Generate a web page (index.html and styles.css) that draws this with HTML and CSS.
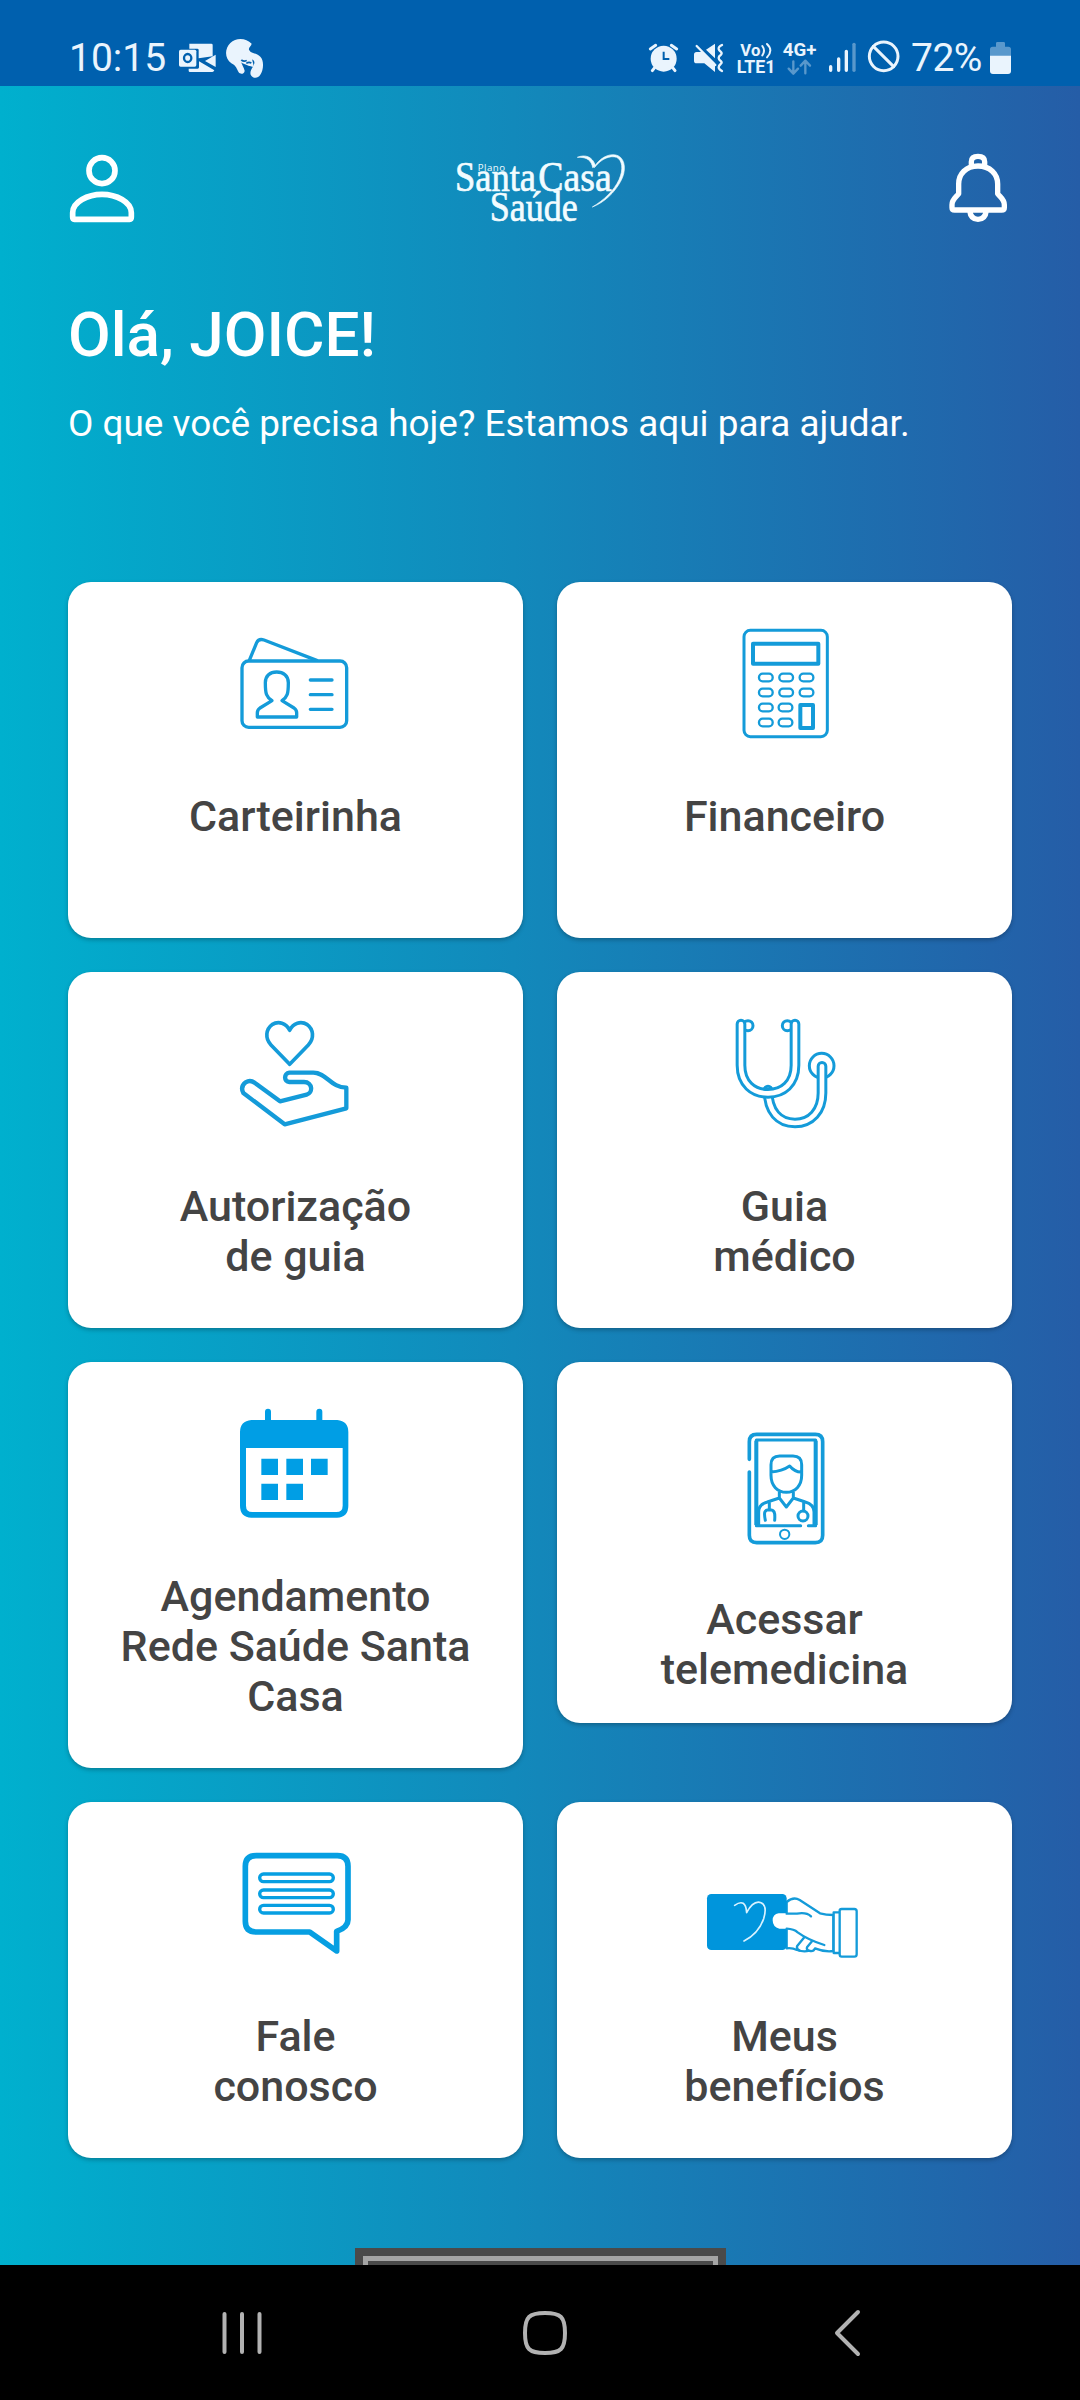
FILE: index.html
```html
<!DOCTYPE html>
<html lang="pt-BR">
<head>
<meta charset="utf-8">
<title>Santa Casa Saúde</title>
<link rel="stylesheet" href="styles.css">
</head>
<body>
<div class="screen">
  <div class="status">
    <span class="status__time">10:15</span>
    <svg class="slot" width="45" height="86" viewBox="408 0 135 258">
      <path d="M448 131h66q4 0 4 4v34l-42 6v-25q0-4-4-4h-24zM527 164v37l-32-18zM446 206h27q4 0 4-4v-18l46 27q-2 5-6 5h-67q-4 0-4-4z"/>
      <rect x="417" y="149" width="52" height="51" rx="5"/>
      <ellipse class="cut" cx="443" cy="174" rx="11" ry="12" stroke-width="7"/>
    </svg>
    <svg class="slot" width="45" height="86" viewBox="543 0 135 258">
      <path d="M635 131C618 113 588 112 571 129C552 148 555 177 574 190C590 198 590 207 596 217C602 225 614 221 614 212C612 203 604 192 602 180C606 184 614 181 620 179C634 174 645 180 643 190C641 202 628 211 632 224C637 236 654 236 660 226C672 209 672 181 661 170C650 159 632 161 627 149C625 142 634 139 635 131z"/>
      <path d="M600 176l36 0l6 26l-20-6l-18-8z"/>
      <path class="cut" d="M604 180q8 6 16 1M619 190q7-5 15-1" stroke-width="5"/>
    </svg>
    <span class="grow"></span>
    <svg class="slot" width="45" height="86" viewBox="75 0 135 258">
      <circle cx="131" cy="176" r="39"/>
      <path class="line" d="M91 147l16-11M170 147l-16-11M104 203l-7 9M158 203l7 9" stroke-width="9"/>
      <path class="cut" d="M131 155v22h17" stroke-width="6"/>
    </svg>
    <svg class="slot" width="43" height="86" viewBox="210 0 129 258">
      <path d="M230 156h20l35 34v26l-32-26h-23q-8 0-8-8v-18q0-8 8-8zM258 149l27-18v44z"/>
      <path class="line" d="M230 138l56 57" stroke-width="7"/>
      <path class="line" d="M306 135q-11 5-10 12q1 4 6 8q6 5 0 10q-6 4-6 9q0 5 6 9q6 5 0 9q-6 5-6 10q0 6 10 11" stroke-width="7"/>
    </svg>
    <svg class="slot" width="47" height="86" viewBox="339 0 141 258">
      <text class="badge" x="361" y="168" font-size="49" textLength="60" lengthAdjust="spacingAndGlyphs">Vo</text>
      <path class="line" d="M427 138q10 14 0 28M441 132q20 19 0 40" stroke-width="6"/>
      <text class="badge" x="350" y="220" font-size="53" textLength="116" lengthAdjust="spacingAndGlyphs">LTE1</text>
    </svg>
    <svg class="slot" width="45" height="86" viewBox="480 0 135 258">
      <text class="badge" x="488" y="168" font-size="54" textLength="101" lengthAdjust="spacingAndGlyphs">4G+</text>
      <path class="line dim" d="M520 184v36M506 206l14 15l14-15M556 220v-37M542 197l14-15l14 15" stroke-width="7"/>
    </svg>
    <svg class="slot" width="40" height="86" viewBox="615 0 120 258">
      <path class="line" d="M632 200v11M656 177v34M679 154v57" stroke-width="10"/>
      <path class="line dim" d="M702 133v78" stroke-width="10"/>
    </svg>
    <svg class="slot" width="45" height="86" viewBox="735 0 135 258">
      <circle class="line" cx="791" cy="169" r="43" stroke-width="9"/>
      <path class="line" d="M760 139l61 61" stroke-width="9"/>
    </svg>
    <span class="status__level">72%</span>
    <svg class="slot" width="25" height="86" viewBox="1101 0 75 258">
      <path opacity=".38" d="M1110 168v-20q0-8 8-8h10v-10q0-4 4-4h19q4 0 4 4v10h10q8 0 8 8v20z"/>
      <path d="M1110 167h63v46q0 9-9 9h-45q-9 0-9-9z"/>
    </svg>
  </div>

  <main class="home">
    <header class="top">
      <svg width="68" height="77" viewBox="84 450 204 231" class="outline" stroke-width="17">
        <circle cx="186" cy="512" r="39"/>
        <path d="M103 658q-5 0-5-7v-13c0-32 45-55 88-55s88 23 88 55v13q0 7-5 7z"/>
      </svg>
      <svg width="180" height="77" viewBox="90 60 540 231" class="logo">
        <text class="plan" x="173" y="122" font-size="29" textLength="82">Plano</text>
        <text x="105" y="182" font-size="126" textLength="243" lengthAdjust="spacingAndGlyphs">Santa</text>
        <text x="355" y="182" font-size="126" textLength="220" lengthAdjust="spacingAndGlyphs">Casa</text>
        <text x="209" y="272" font-size="126" textLength="264" lengthAdjust="spacingAndGlyphs">Saúde</text>
        <path d="M472 82C496 72 517 80 526 106C523 111 521 112 518 113C515 94 503 80 472 82zM526 106C546 77 575 69 594 77C617 88 619 124 602 154C583 189 552 218 517 231C551 211 582 182 597 149C611 118 607 91 590 82C571 76 546 84 523 113z"/>
      </svg>
      <svg width="68" height="77" viewBox="972 450 204 231" class="outline" stroke-width="16">
        <path d="M1054 494v-9q0-16 20-16t20 16v9M1074 498c-36 0-58 24-58 54v29c-7 10-20 17-20 33v9q0 7 8 7h141q8 0 8-7v-9c0-16-13-23-20-33v-29c0-30-23-54-59-54zM1049 632q3 26 25 26t25-26"/>
      </svg>
    </header>
    <h1 class="hello">Olá, JOICE!</h1>
    <p class="intro">O que você precisa hoje? Estamos aqui para ajudar.</p>

    <div class="grid">
      <a class="card">
        <svg class="icon" viewBox="-12 0 600 480" stroke-width="10">
          <rect x="126" y="183" width="314" height="199" rx="20"/>
          <path d="M148 181l22-53q6-13 22-8l158 61M331 240h65M331 284h65M331 328h65"/>
          <path d="M216 302c-17-11-20-20-20-54c0-20 14-32 34-32s35 12 35 32c0 34-3 43-19 54l36 22q8 6 8 14v13h-118v-13q0-8 8-14z"/>
        </svg>
        <span class="label">Carteirinha</span>
      </a>
      <a class="card">
        <svg class="icon" viewBox="-45 0 600 480" stroke-width="7">
          <rect x="132" y="91" width="250" height="319" rx="19" stroke-width="9"/>
          <rect x="159" y="131" width="196" height="60" stroke-width="12"/>
          <rect x="301" y="315" width="38" height="69" stroke-width="12"/>
          <rect x="177" y="221" width="41" height="23" rx="11"/><rect x="238" y="221" width="41" height="23" rx="11"/><rect x="299" y="221" width="41" height="23" rx="11"/>
          <rect x="177" y="266" width="41" height="23" rx="11"/><rect x="238" y="266" width="41" height="23" rx="11"/><rect x="299" y="266" width="41" height="23" rx="11"/>
          <rect x="177" y="311" width="41" height="23" rx="11"/><rect x="236" y="311" width="41" height="23" rx="11"/>
          <rect x="177" y="356" width="41" height="23" rx="11"/><rect x="236" y="356" width="41" height="23" rx="11"/>
        </svg>
        <span class="label">Financeiro</span>
      </a>
      <a class="card">
        <svg class="icon" viewBox="-12 0 600 480">
          <path stroke-width="11" d="M269 223l-56-58c-19-20-15-48 3-61c19-12 43-5 53 17c10-22 34-29 53-17c18 13 22 41 3 61z"/>
          <path stroke-width="13" d="M240 334l-75-55q-14-11-28-2q-17 13-7 32l124 94l185-48v-62c-47 0-59-45-99-45h-72c-17 2-17 27 0 28h44c27 0 27 33 8 38z"/>
        </svg>
        <span class="label">Autorização<br>de guia</span>
      </a>
      <a class="card">
        <svg class="icon" viewBox="-45 0 600 480">
          <circle cx="365" cy="227" r="37" stroke-width="9"/>
          <path class="tube" d="M204 300c0 65 33 99 81 99s81-36 81-90v-80"/><path class="tube-in" d="M204 300c0 65 33 99 81 99s81-36 81-90v-80"/>
          <circle cx="144" cy="107" r="15" stroke-width="9"/><circle cx="262" cy="107" r="15" stroke-width="9"/>
          <path class="tube" d="M123 102v124c0 55 36 84 81 84s81-29 81-84v-124"/><path class="tube-in" d="M123 102v124c0 55 36 84 81 84s81-29 81-84v-124"/>
        </svg>
        <span class="label">Guia<br>médico</span>
      </a>
      <a class="card">
        <svg class="icon solid" viewBox="-12 -30 600 480">
          <path fill-rule="evenodd" d="M154 90h41v-25q0-9 9-9t9 9v25h136v-25q0-9 9-9t9 9v25h45q33 3 33 36v221q0 34-34 36h-257q-34-2-34-36v-221q0-33 34-36zM138 174v173q0 19 19 19h252q19 0 19-19v-173z"/>
          <path d="M184 206h50v49h-50zM259 206h50v49h-50zM333 206h50v49h-50zM184 281h50v49h-50zM259 281h50v49h-50z"/>
        </svg>
        <span class="label">Agendamento<br>Rede Saúde Santa<br>Casa</span>
      </a>
      <a class="card card--low">
        <svg class="icon" viewBox="-45 -21 600 480" stroke-width="9">
          <path stroke-width="11" d="M148 148v-53q0-22 22-22h176q22 0 22 22v281q0 22-22 22h-176q-22 0-22-22v-190"/>
          <path d="M169 346v-256h178v256M169 347h133M325 347h22"/>
          <path stroke-width="12" d="M169 92v253M347 92v253" stroke-linecap="butt"/>
          <path d="M213 186v-22q0-26 26-26h40q26 0 26 26v32c0 31-19 51-46 51s-46-20-46-51zM213 186q33-2 56-18q16 19 36 18M238 246v18l21 27l21-27v-18M238 264l-36 12q-26 7-26 30v39M280 264l36 12q26 7 26 30v39M208 276v24M196 331c-5-24-3-32 12-32s18 8 16 32M311 276v26"/>
          <circle cx="309" cy="318" r="15"/><circle cx="254" cy="373" r="14" stroke-width="6"/>
        </svg>
        <span class="label">Acessar<br>telemedicina</span>
      </a>
      <a class="card">
        <svg class="icon bright" viewBox="-12 -30 600 480">
          <path stroke-width="17" d="M168 77h244q32 0 32 32v160q0 23-34 35v59l-81-57h-161q-32 0-32-32v-165q0-32 32-32z"/>
          <g stroke-width="10"><rect x="179" y="132" width="221" height="23" rx="11.500"/><rect x="179" y="180" width="221" height="23" rx="11.500"/><rect x="179" y="226" width="221" height="23" rx="11.500"/></g>
        </svg>
        <span class="label">Fale<br>conosco</span>
      </a>
      <a class="card">
        <svg class="icon" viewBox="-15 -120 600 480" stroke-width="7">
          <path fill="#fff" d="M290 126q20-17 39-6l61 40q18 5 40 5v108q-25 4-55-8q-5 12-18 7q-15 5-36-2q-14-7-31-5z"/>
          <rect x="51" y="102" width="239" height="168" rx="13" fill="#0095dc" stroke="none"/>
          <path fill="#fff" stroke="none" d="M363 168q-13-13-38-8h-59q-18 3-18 21q0 20 20 25h35l70 40z"/>
          <path d="M290 161h31q28-5 42 8M290 206q22 1 33 11q30 22 80 38M343 232l-22 27q-2 9 8 13M366 244l-15 18q-2 5 4 10"/>
          <path fill="#fff" d="M431 157h18v122h-18zM449 152q0-5 6-5h38q7 0 7 7v129q0 7-7 7h-38q-6 0-6-7z"/>
          <path class="swirl" d="M134 136q33-23 36 22q20-38 43-30q20 9 8 48q-15 44-59 67"/>
        </svg>
        <span class="label">Meus<br>benefícios</span>
      </a>
    </div>
    <div class="peek"></div>
  </main>

  <nav class="nav">
    <svg width="44" height="50" viewBox="0 0 44 50" stroke-width="4"><path d="M4.500 6v38M22 6v38M39.500 6v38"/></svg>
    <svg width="50" height="50" viewBox="0 0 50 50" stroke-width="4"><path d="M25 5c16 0 20 4 20 20s-4 20-20 20s-20-4-20-20s4-20 20-20z"/></svg>
    <svg width="44" height="50" viewBox="0 0 44 50" stroke-width="4"><path d="M32 4L11 25l21 21"/></svg>
  </nav>
</div>
</body>
</html>
```
FILE: styles.css
```css
* { box-sizing: border-box; margin: 0; }
body { font-family: Roboto, sans-serif; background: #000; }
svg { display: block; flex: none; overflow: visible; }

.screen { width: 1080px; height: 2400px; display: flex; flex-direction: column; overflow: hidden; }

.status {
  height: 86px; flex: none; display: flex; padding: 0 68px;
  background: #0060ae; color: #eaf4fd; font-size: 39px; line-height: 116px;
}
.status__time { width: 108px; padding-left: 1px; }
.status__level { width: 77px; padding-left: 1px; white-space: nowrap; letter-spacing: -0.5px; }
.grow { flex: 1; }
.slot { fill: #eaf4fd; }
.slot .line { fill: none; stroke: #eaf4fd; stroke-linecap: round; stroke-linejoin: round; }
.slot .cut { fill: none; stroke: #0060ae; }
.slot .dim { opacity: .38; }
.badge { font-weight: 700; }

.home {
  height: 2179px; flex: none; display: flex; flex-direction: column; padding: 64px 68px 0; overflow: hidden;
  background: linear-gradient(90deg, #00b0ce, #1387ba 50%, #255da7);
  color: #fff;
}
.top { display: flex; justify-content: space-between; }
.outline { fill: none; stroke: #fff; stroke-linejoin: round; }
.logo { fill: #f2fcff; stroke: #f2fcff; stroke-width: 2px; font-family: "Liberation Serif", serif; }
.logo .plan { font-family: "Open Sans", sans-serif; stroke: none; }

.hello { font-size: 62px; line-height: 70px; font-weight: 500; margin-top: 73px; white-space: nowrap; }
.intro { font-size: 36.9px; line-height: 46px; margin-top: 31px; white-space: nowrap; }

.grid { display: grid; grid-template-columns: 1fr 1fr; gap: 34px; align-items: start; margin-top: 135px; }
.card {
  min-height: 356px; border-radius: 23px; padding: 18px 0 47px; background: #fff;
  display: flex; flex-direction: column; align-items: center;
  box-shadow: 0 2px 4px rgba(0, 0, 0, .25);
}
.card--low { padding-top: 41px; padding-bottom: 29px; }
.icon { width: 200px; height: 160px; margin-bottom: 31px; fill: none; stroke: #149bd9; stroke-linecap: round; stroke-linejoin: round; }
.icon.solid { fill: #009ee5; stroke: none; }
.icon.bright { stroke: #069fe2; }
.icon .tube { stroke-width: 32px; }
.icon .tube-in { stroke: #fff; stroke-width: 14px; }
.icon .swirl { stroke: #d9f2ff; stroke-width: 5px; }
.label { color: #444; font-size: 43px; line-height: 50px; font-weight: 500; text-align: center; white-space: nowrap; }

.peek {
  width: 371px; height: 60px; flex: none; align-self: center; margin-top: 90px;
  background: #4a4a4a; border: 8px solid #4a4a4a;
  box-shadow: inset 0 0 0 5px #a5a5a5;
}

.nav { flex: 1; display: flex; justify-content: space-between; padding: 43px 210px 0 220px; background: #000; }
.nav svg { fill: none; stroke: #b2b2b2; stroke-linecap: round; stroke-linejoin: round; }
```
